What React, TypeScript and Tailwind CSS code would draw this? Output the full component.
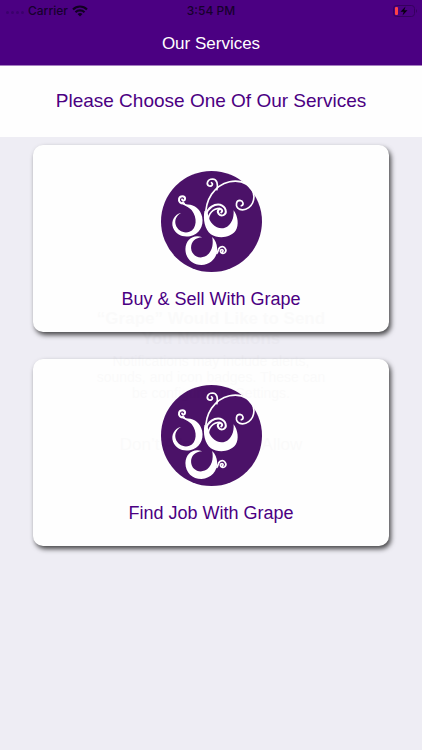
function GrapeLogo() {
  return (
    <svg viewBox="34 35 302 302" className="size-[101px]" aria-hidden="true">
      <circle cx="185" cy="186" r="151" fill="#4b1268" />
      <g transform="translate(54 42)">
        <g fill="#fff">
          <path d="M41 118C20 123 9 143 16 163C24 184 45 192 67 188C94 183 109 158 103 130C98 108 81 93 60 93C54 93 49 89 47 84L41 87C48 98 62 99 72 110C89 132 88 165 65 175C48 181 29 171 24 154C20 139 26 126 41 118Z" />
          <path d="M110 112C105 138 111 168 129 182C151 197 188 193 203 172C214 154 210 127 197 110C199 133 191 154 171 163C149 170 124 152 120 120Z" />
          <path d="M103 191C77 181 54 198 53 226C53 255 74 274 101 274C130 273 149 250 148 225C147 209 142 199 133 190C138 213 132 239 111 249C90 257 71 243 70 224C69 205 82 192 103 191Z" />
        </g>
        <g fill="none" stroke="#fff" strokeWidth="5" strokeLinecap="round">
          <path strokeWidth="6" d="M49 90C38 91 32 84 34 76C37 66 52 66 52 76C52 82 45 84 43 78" />
          <path d="M114 128C112 80 138 36 185 25C225 17 257 38 258 70C257 100 232 114 214 107C201 100 204 81 216 81C226 82 229 94 220 97" />
          <path d="M147 49C151 32 148 18 134 17C118 17 114 34 124 38C133 40 137 31 131 28" />
          <path strokeWidth="6" d="M115 123C121 102 139 91 157 94C174 99 179 119 167 125C155 130 145 115 153 108C160 104 167 112 160 117" />
          <path d="M121 142C121 121 135 105 156 105" />
          <path d="M147 239C152 235 149 226 157 221C169 215 179 229 171 237C163 243 154 235 159 229C164 226 168 231 164 234" />
        </g>
      </g>
    </svg>
  );
}

function ServiceCard({ label }: { label: string }) {
  return (
    <button
      type="button"
      className="flex w-full flex-col items-center rounded-[10px] bg-[#fefefe] pt-[26px] pb-[23px] shadow-[2px_3px_5px_0px_rgba(0,0,0,0.7)]"
    >
      <GrapeLogo />
      <span className="mt-[17px] text-[18px] leading-5 text-[#4b0082]">{label}</span>
    </button>
  );
}

function FadingPrompt() {
  return (
    <div
      aria-hidden="true"
      className="pointer-events-none absolute inset-x-0 top-[309px] mx-auto w-[240px] text-center text-black opacity-[0.012]"
    >
      <p className="text-[17px] leading-5 font-bold">“Grape” Would Like to Send You Notifications</p>
      <p className="mt-1 text-[14px] leading-4">
        Notifications may include alerts, sounds, and icon badges. These can be configured in Settings.
      </p>
      <div className="mt-8 flex justify-around text-[17px] leading-6">
        <span>Don’t Allow</span>
        <span>Allow</span>
      </div>
    </div>
  );
}

function StatusBar() {
  return (
    <div className="grid h-[21px] grid-cols-3 items-center text-[12px] leading-5 text-[#17002d]">
      <div className="flex items-center gap-1 pl-[6px]">
        <div className="flex w-[18px] gap-[2px] pt-1">
          <i className="size-[3px] rounded-full bg-[#3b006c]" />
          <i className="size-[3px] rounded-full bg-[#3b006c]" />
          <i className="size-[3px] rounded-full bg-[#3b006c]" />
          <i className="size-[3px] rounded-full bg-[#3b006c]" />
        </div>
        <span className="font-['Inter','Liberation_Sans',sans-serif] font-medium">Carrier</span>
        <svg viewBox="0 0 16 12" className="h-3 w-4" fill="none" stroke="#110022" strokeWidth="2.2" aria-label="Wi-Fi">
          <path d="M1 4.5C5 .5 11 .5 15 4.5M3.5 7.2C6 4.8 10 4.8 12.5 7.2" />
          <path d="M8 11.5L5.5 9Q8 7 10.5 9Z" fill="#110022" stroke="none" />
        </svg>
      </div>
      <span className="text-center font-['Inter','Liberation_Sans',sans-serif] font-medium">3:54 PM</span>
      <svg viewBox="0 0 25 12" className="mr-1 h-3 w-[25px] justify-self-end" aria-label="Battery charging">
        <rect x=".5" y=".5" width="21" height="11" rx="3" fill="none" stroke="#35005e" />
        <path d="M23 4Q25 6 23 8Z" fill="#35005e" />
        <rect x="2" y="2" width="3" height="8" rx="1" fill="#ff4146" />
        <path d="M12.5 1.5L7.5 6.7H10.7L9.5 10.5L14.5 5.3H11.3Z" fill="#080010" />
      </svg>
    </div>
  );
}

export default function App() {
  return (
    <div className="relative min-h-screen bg-[#eeedf4] font-['Liberation_Sans',Arial,sans-serif]">
      <header className="border-b border-[#a57fc0] bg-[#4b0082]">
        <StatusBar />
        <h1 className="pt-[9px] pb-[7px] text-center text-[17px] leading-7 text-white">Our Services</h1>
      </header>
      <h2 className="bg-[#fefefe] pt-[21px] pb-[22px] text-center text-[19px] leading-7 text-[#4b0082]">
        Please Choose One Of Our Services
      </h2>
      <main className="flex flex-col gap-[27px] px-[33px] pt-2">
        <ServiceCard label="Buy & Sell With Grape" />
        <ServiceCard label="Find Job With Grape" />
      </main>
      <FadingPrompt />
    </div>
  );
}
